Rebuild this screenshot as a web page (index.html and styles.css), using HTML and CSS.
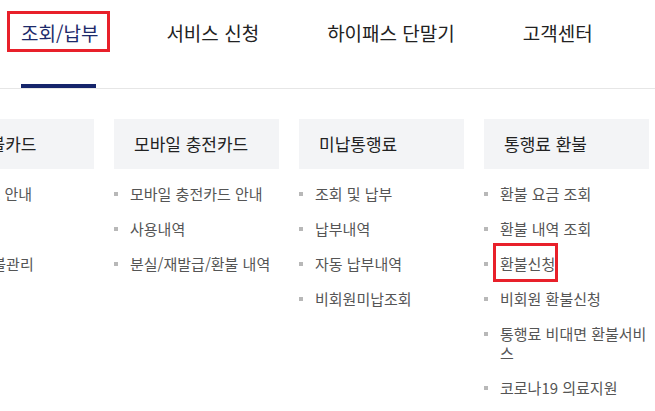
FILE: index.html
```html
<!DOCTYPE html>
<html lang="ko">
<head>
  <meta charset="UTF-8" />
  <meta name="viewport" content="width=device-width, initial-scale=1" />
  <title>하이패스 - 조회/납부</title>
  <link rel="stylesheet" href="styles.css">
</head>
<body>

  <!-- Top Menu -->
  <nav class="gnb">
    <ul class="gnb-list">
      <li class="gnb-item active"><a href="#" class="marked">조회/납부</a></li>
      <li class="gnb-item"><a href="#">서비스 신청</a></li>
      <li class="gnb-item"><a href="#">하이패스 단말기</a></li>
      <li class="gnb-item"><a href="#">고객센터</a></li>
    </ul>
  </nav>

  <!-- Mega Menu -->
  <section class="mega">
    <div class="mega-col">
      <h3 class="mega-title">RF 선불카드</h3>
      <ul class="mega-links">
        <li><a href="#">선불카드 안내</a></li>
        <li><a href="#">사용내역</a></li>
        <li><a href="#">분실/환불관리</a></li>
      </ul>
    </div>
    <div class="mega-col">
      <h3 class="mega-title">모바일 충전카드</h3>
      <ul class="mega-links">
        <li><a href="#">모바일 충전카드 안내</a></li>
        <li><a href="#">사용내역</a></li>
        <li><a href="#">분실/재발급/환불 내역</a></li>
      </ul>
    </div>
    <div class="mega-col">
      <h3 class="mega-title">미납통행료</h3>
      <ul class="mega-links">
        <li><a href="#">조회 및 납부</a></li>
        <li><a href="#">납부내역</a></li>
        <li><a href="#">자동 납부내역</a></li>
        <li><a href="#">비회원미납조회</a></li>
      </ul>
    </div>
    <div class="mega-col">
      <h3 class="mega-title">통행료 환불</h3>
      <ul class="mega-links">
        <li><a href="#">환불 요금 조회</a></li>
        <li><a href="#">환불 내역 조회</a></li>
        <li><a href="#" class="marked">환불신청</a></li>
        <li><a href="#">비회원 환불신청</a></li>
        <li><a href="#">통행료 비대면 환불서비스</a></li>
        <li><a href="#">코로나19 의료지원</a></li>
      </ul>
    </div>
  </section>

</body>
</html>
```

FILE: styles.css
```css
/* Reset & General */
body, html {
  margin: 0;
  padding: 0;
  font-family: "Noto Sans CJK KR", "Noto Sans", sans-serif;
  background: #fff;
  color: #222;
  overflow: hidden;
}

ul {
  margin: 0;
  padding: 0;
  list-style: none;
}

a {
  color: inherit;
  text-decoration: none;
}

/* Top Menu */
.gnb {
  height: 88px;
  border-bottom: 1px solid #e6e6e6;
}

.gnb-list {
  display: flex;
  gap: 68px;
  padding-left: 21px;
  height: 100%;
}

.gnb-item {
  position: relative;
  height: 100%;
}

.gnb-item a {
  display: inline-block;
  margin-top: 21px;
  font-size: 19px;
  font-weight: 400;
  line-height: 24px;
  color: #222;
}

.gnb-item.active a {
  color: #1d2a6a;
}

.gnb-item.active::after {
  content: "";
  position: absolute;
  left: 0;
  right: 2px;
  bottom: 0;
  height: 4px;
  background: #15256b;
}

/* Red highlight box */
.marked {
  position: relative;
}
.marked::before {
  content: "";
  position: absolute;
  border: 3px solid #e8202a;
  pointer-events: none;
}

.gnb-item .marked::before {
  top: -10px;
  bottom: -7px;
  left: -14px;
  right: -12px;
}

.mega-links .marked {
  display: inline-block;
}
.mega-links .marked::before {
  top: -11px;
  bottom: -9px;
  left: -7px;
  right: -3px;
}

/* Mega Menu */
.mega {
  display: grid;
  grid-template-columns: repeat(4, 165px);
  gap: 20px;
  margin: 30px 0 0 -71px;
}

.mega-title {
  margin: 0;
  height: 50px;
  line-height: 50px;
  padding-left: 20px;
  background: #f3f4f6;
  font-size: 17px;
  font-weight: 400;
  color: #222;
  white-space: nowrap;
}

.mega-links {
  margin-top: 15px;
}

.mega-links li {
  position: relative;
  padding-left: 16px;
  margin-bottom: 16px;
  font-size: 15px;
  line-height: 19px;
  color: #555;
}

.mega-links li::before {
  content: "";
  position: absolute;
  left: 0;
  top: 8px;
  width: 4px;
  height: 4px;
  background: #b8b8b8;
}
```
